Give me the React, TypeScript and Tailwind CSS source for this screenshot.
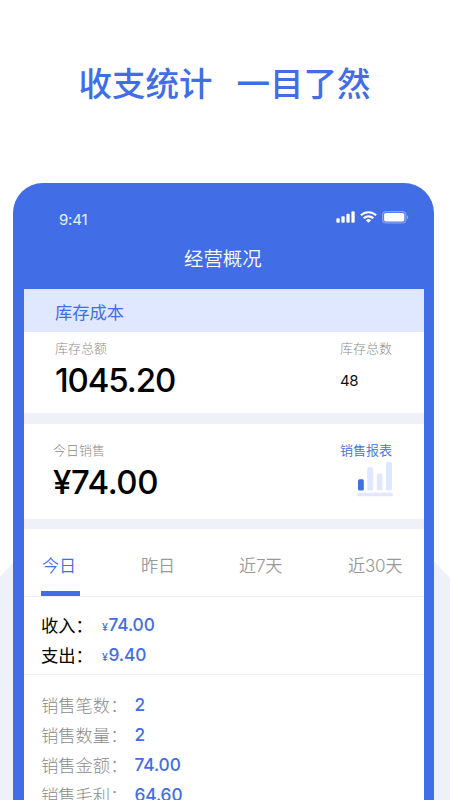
import type { ReactNode } from "react";
import clsx from "clsx";

const TABS = ["今日", "昨日", "近7天", "近30天"];

const CASH_FLOW = [
  { label: "收入", value: "74.00" },
  { label: "支出", value: "9.40" },
];

const SALES = [
  { label: "销售笔数", value: "2" },
  { label: "销售数量", value: "2" },
  { label: "销售金额", value: "74.00" },
  { label: "销售毛利", value: "64.60" },
];

function SignalIcon() {
  return (
    <svg width="19" height="12" viewBox="0 0 19 12" fill="white">
      <rect x="0.4" y="7.2" width="3.3" height="4.6" rx="1" />
      <rect x="5.4" y="5.2" width="3.3" height="6.6" rx="1" />
      <rect x="10.4" y="2.8" width="3.3" height="9" rx="1" />
      <rect x="15.4" y="0.2" width="3.3" height="11.6" rx="1" />
    </svg>
  );
}

function WifiIcon() {
  return (
    <svg width="17" height="12" viewBox="0 0 17 12" fill="none" stroke="white" strokeWidth="2.1">
      <path d="M0.9 4.3a11 11 0 0 1 15.2 0" />
      <path d="M3.7 7.3a7 7 0 0 1 9.6 0" />
      <path d="M8.5 11.8L5.9 9.3a3.8 3.8 0 0 1 5.2 0z" fill="white" stroke="none" />
    </svg>
  );
}

function BatteryIcon() {
  return (
    <svg width="27" height="13" viewBox="0 0 27 13">
      <rect x="0.5" y="0.5" width="23.4" height="11.6" rx="3" fill="white" fillOpacity="0.12" stroke="white" strokeOpacity="0.35" />
      <rect x="2.1" y="2.1" width="20.2" height="8.4" rx="1.7" fill="white" />
      <path d="M25 4.3v4a2.3 2.3 0 0 0 0-4z" fill="white" fillOpacity="0.45" />
    </svg>
  );
}

function ReportIcon() {
  return (
    <svg className="mt-[1.5px]" width="36" height="35" viewBox="0 0 36 35" fill="#e0e8ff">
      <rect x="1" y="17.2" width="5.8" height="11.3" rx="1.5" fill="#416de6" />
      <rect x="10.2" y="5.2" width="6" height="23.3" rx="1.5" />
      <rect x="19.8" y="11.6" width="5.6" height="16.9" rx="1.5" />
      <rect x="29" y="0" width="6" height="28.5" rx="1.5" />
      <rect x="0" y="30.8" width="36" height="3.4" rx="1.5" />
    </svg>
  );
}

function Label({ children }: { children: ReactNode }) {
  return <div className="text-[13px] leading-[21px] font-light text-[#8c8c8c]">{children}</div>;
}

function Colon() {
  return <span className="inline-block">：</span>;
}

export default function App() {
  return (
    <div
      lang="zh-CN"
      className="relative flex h-[800px] w-[450px] flex-col overflow-hidden bg-white font-['Inter','Noto_Sans_CJK_SC',sans-serif]"
    >
      <div className="absolute inset-x-0 top-[548px] bottom-0 bg-[#eef2f8] [clip-path:polygon(0_29px,26px_0,422px_0,450px_30px,450px_100%,0_100%)]" />

      <h1 className="flex h-[183px] shrink-0 gap-6 pt-[60px] pl-[78.5px] text-[33.5px] leading-[48px] font-medium text-[#416de6]">
        <span>收支统计</span>
        <span>一目了然</span>
      </h1>

      <main className="relative ml-[13px] flex h-[617px] w-[421px] shrink-0 flex-col rounded-t-[30px] bg-[#416de6] pr-[10px] pl-[11px]">
        <div className="flex h-[60px] shrink-0 items-start pt-[26px] pr-[15px] pl-[35px]">
          <span className="pt-px text-[15px] leading-5 tracking-[-0.2px] text-white/90">9:41</span>
          <div className="ml-auto flex items-start gap-[5px] pt-[2px]">
            <SignalIcon />
            <WifiIcon />
            <BatteryIcon />
          </div>
        </div>
        <div className="h-[46px] shrink-0 pl-[160px] text-[19.4px] leading-[33px] font-[350] text-white">经营概况</div>

        <div className="flex grow flex-col bg-white">
          <h2 className="h-[43px] bg-[#e0e8ff] pl-[31px] text-[17.3px] leading-[47px] text-[#416de6]">库存成本</h2>

          <section className="flex h-[81px] justify-between pt-[6px] pr-8 pl-[31px]">
            <div>
              <Label>库存总额</Label>
              <div className="mt-px text-[33px] leading-10 font-medium tracking-[-1.1px] text-black">1045.20</div>
            </div>
            <div>
              <Label>库存总数</Label>
              <div className="mt-3 text-[15px] leading-5 tracking-[-0.4px] text-[#111]">48</div>
            </div>
          </section>

          <div className="h-[11px] bg-[#eef2f8]" />

          <section className="flex h-[95px] justify-between pt-[16px] pr-[31px] pl-[29px]">
            <div>
              <Label>今日销售</Label>
              <div className="mt-px text-[33px] leading-10 font-medium tracking-[-0.4px] text-black">¥74.00</div>
            </div>
            <div className="flex flex-col items-end">
              <div className="pr-px text-[13px] leading-5 font-[350] text-[#416de6]">销售报表</div>
              <ReportIcon />
            </div>
          </section>

          <div className="h-[10px] bg-[#eef2f8]" />

          <nav className="grid h-[68px] grid-cols-[100px_98px_109px_auto] border-b border-[#eef2f8] pl-[17px] text-[17.1px] leading-[74px] font-[350]">
            {TABS.map((tab, i) => (
              <div
                key={tab}
                className={clsx("flex flex-col", i === 0 ? "w-[39px] pl-px text-[#416de6]" : "tracking-[-0.2px] text-[#999]")}
              >
                <span className="h-[62px]">{tab}</span>
                {i === 0 && <span className="-ml-px h-[5px] bg-[#416de6]" />}
              </div>
            ))}
          </nav>

          <dl className="h-[78px] border-b border-[#eef2f8] pt-[13px] pl-[17px] text-[17.3px] leading-[30px]">
            {CASH_FLOW.map((row) => (
              <div key={row.label} className="flex h-[30px]">
                <dt className="w-[61px] pt-px text-black">
                  {row.label}
                  <Colon />
                </dt>
                <dd className="flex items-baseline font-medium tracking-[-0.1px] text-[#416de6]">
                  <span className="w-[6.5px] text-[10.5px] leading-none">¥</span>
                  {row.value}
                </dd>
              </div>
            ))}
          </dl>

          <dl className="h-[125px] overflow-hidden pt-[15px] pl-[17px] text-[17.3px] leading-[30px]">
            {SALES.map((row) => (
              <div key={row.label} className="flex h-[30px]">
                <dt className="w-[93.5px] pt-px font-light whitespace-nowrap text-[#8c8c8c]">
                  {row.label}
                  <Colon />
                </dt>
                <dd className="font-medium tracking-[-0.1px] text-[#416de6]">{row.value}</dd>
              </div>
            ))}
          </dl>
        </div>
      </main>
    </div>
  );
}
